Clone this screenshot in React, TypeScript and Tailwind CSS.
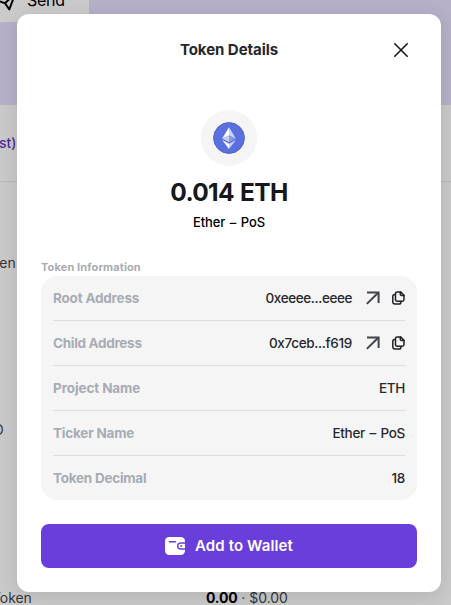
import type { ReactNode } from "react";

function ArrowIcon() {
  return (
    <svg width="14" height="14" viewBox="0 0 14 14" fill="none" stroke="#41444b" strokeWidth="2">
      <path d="M0.8 12.9 L12.2 1.8" />
      <path d="M1 1.6 H12.6 V12" />
    </svg>
  );
}

function CopyIcon() {
  return (
    <svg width="13" height="14" viewBox="0 0 13 14" fill="none" stroke="#1f2126" strokeWidth="1.5" strokeLinejoin="round" strokeLinecap="round">
      <path d="M5.2 0.9 H8.6 L12 4.3 V8.6 A1.7 1.7 0 0 1 10.3 10.3 H5.2 A1.7 1.7 0 0 1 3.5 8.6 V2.6 A1.7 1.7 0 0 1 5.2 0.9 Z" />
      <path d="M8.3 1 V3.2 A1.2 1.2 0 0 0 9.5 4.5 H11.9" />
      <path d="M3.1 3.6 H2.6 A1.8 1.8 0 0 0 0.8 5.4 V10.8 A2.3 2.3 0 0 0 3.1 13.1 H7 A1.9 1.9 0 0 0 8.9 11.2 V10.6" />
    </svg>
  );
}

function EthLogo() {
  return (
    <svg width="32" height="32" viewBox="0 0 32 32">
      <circle cx="16" cy="16" r="15.4" fill="#5b70df" stroke="#5063c2" strokeWidth="1" />
      <path d="M16 5.2 L9.2 16.4 L16 13.4 Z" fill="#fff" />
      <path d="M16 5.2 L22.8 16.4 L16 13.4 Z" fill="#cbd2f7" />
      <path d="M16 13.4 L9.2 16.4 L16 20.3 Z" fill="#c4ccf6" />
      <path d="M16 13.4 L22.8 16.4 L16 20.3 Z" fill="#8c9be9" />
      <path d="M9.2 17.9 L16 21.8 V27 Z" fill="#fff" />
      <path d="M22.8 17.9 L16 21.8 V27 Z" fill="#cbd2f7" />
    </svg>
  );
}

function WalletIcon() {
  return (
    <svg width="20" height="18" viewBox="0 0 20 18" fill="none">
      <rect x="0" y="0" width="20" height="18" rx="4.2" fill="#fff" />
      <path d="M4.5 4.7 H10.5" stroke="#6a3eda" strokeWidth="1.5" strokeLinecap="round" />
      <path d="M20.5 6 H15.7 A3 3 0 0 0 15.7 12 H20.5" fill="#fff" stroke="#6a3eda" strokeWidth="1.4" />
      <path d="M15.8 9 H16.7" stroke="#6a3eda" strokeWidth="1.5" strokeLinecap="round" />
    </svg>
  );
}

function Row({ label, labelClass, children }: { label: string; labelClass: string; children: ReactNode }) {
  return (
    <div className="flex h-[45px] items-center justify-between border-b border-[#dddddf] last:h-11 last:border-b-0">
      <span className={`text-[13.5px] font-bold text-[#a8acb4] ${labelClass}`}>{label}</span>
      <div className="flex items-center text-[13.5px] font-medium text-[#26282e]">{children}</div>
    </div>
  );
}

function LinkIcons() {
  return (
    <>
      <span className="ml-[14px]"><ArrowIcon /></span>
      <span className="ml-3"><CopyIcon /></span>
    </>
  );
}

function PageBehind() {
  return (
    <div className="flex h-full flex-col whitespace-nowrap text-sm text-[#34363c]">
      <div className="h-[105px] shrink-0 bg-[#b6b0c9]">
        <div className="flex h-[22px] w-[89px] bg-[#cbcbcb] text-black">
          <svg width="16" height="12" viewBox="0 0 16 12" fill="none" stroke="#050505" strokeWidth="2" strokeLinejoin="round">
            <path d="M-1 1.2 L5 3.2 L9.3 9.4 L13.6 -2 M5 3.2 L9.5 -1" />
          </svg>
          <span className="-mt-[11px] ml-[11px] text-[16px] leading-[22px] tracking-[-0.3px]">Send</span>
        </div>
      </div>
      <div className="flex h-[77px] shrink-0 items-center border-b border-[#b9b9bb] font-medium text-[#4c2c9c]">
        <span className="-ml-px">st)</span>
      </div>
      <div className="flex h-[161px] shrink-0 items-center">
        <span className="-ml-[8px]">ken</span>
      </div>
      <div className="flex h-[174px] shrink-0 items-center">
        <span className="-ml-[7px]">O</span>
      </div>
      <div className="flex h-[88px] items-end">
        <span className="-ml-[8px] h-[17px] w-[214px] leading-[20px] tracking-[-0.1px]">Token</span>
        <span className="h-[17px] leading-[20px]"><b className="tracking-[-0.2px] text-black">0.00</b> · <span className="tracking-[-0.05px]">$0.00</span></span>
      </div>
    </div>
  );
}

export default function App() {
  return (
    <div className="relative h-[605px] w-[451px] overflow-hidden bg-[#cacaca] font-['Inter','Liberation_Sans',sans-serif]">
      <PageBehind />
      <div className="absolute top-[14px] left-[17px] flex h-[578px] w-[424px] flex-col rounded-xl bg-white px-6 whitespace-nowrap shadow-[0_4px_20px_rgba(0,0,0,0.12)]">
        <header className="grid h-[72px] grid-cols-[24px_1fr_24px] items-center">
          <span />
          <h1 className="text-center text-[15px] font-bold tracking-[-0.05px] text-[#26282e]">Token Details</h1>
          <svg className="-ml-1" width="24" height="24" viewBox="0 0 24 24" stroke="#17181b" strokeWidth="1.6" strokeLinecap="round">
            <path d="M5.8 5.8 L18.2 18.2 M18.2 5.8 L5.8 18.2" />
          </svg>
        </header>
        <section className="mt-6 flex flex-col items-center">
          <div className="flex size-14 items-center justify-center rounded-full bg-[#f5f5f6]"><EthLogo /></div>
          <div className="mt-2 text-[24.5px] leading-9 font-bold tracking-[-0.65px] text-[#17181b] [word-spacing:1px]">0.014 ETH</div>
          <div className="mt-0.5 text-[13px] leading-5 font-medium tracking-[-0.1px] text-black [word-spacing:1.2px]">Ether – PoS</div>
        </section>
        <section className="mt-[27px]">
          <h2 className="h-[17px] text-[11px] leading-4 font-bold tracking-[0.12px] text-[#a8acb4]">Token Information</h2>
          <div className="rounded-2xl bg-[#f5f5f5] px-3">
            <Row label="Root Address" labelClass="tracking-[-0.2px]"><span className="tracking-[-0.4px]">0xeeee...eeee</span><LinkIcons /></Row>
            <Row label="Child Address" labelClass="tracking-[-0.3px]"><span className="tracking-[-0.33px]">0x7ceb...f619</span><LinkIcons /></Row>
            <Row label="Project Name" labelClass="tracking-[-0.1px]"><span className="tracking-[-0.3px]">ETH</span></Row>
            <Row label="Ticker Name" labelClass="tracking-[-0.2px]"><span className="tracking-[-0.3px] [word-spacing:1.2px]">Ether – PoS</span></Row>
            <Row label="Token Decimal" labelClass="tracking-[-0.25px]"><span className="tracking-[-0.3px]">18</span></Row>
          </div>
        </section>
        <button className="mt-6 flex h-11 shrink-0 items-center justify-center gap-[10px] rounded-lg bg-[#6a3eda] text-[15px] font-semibold tracking-[0.12px] text-white">
          <WalletIcon />
          <span>Add to Wallet</span>
        </button>
      </div>
    </div>
  );
}
